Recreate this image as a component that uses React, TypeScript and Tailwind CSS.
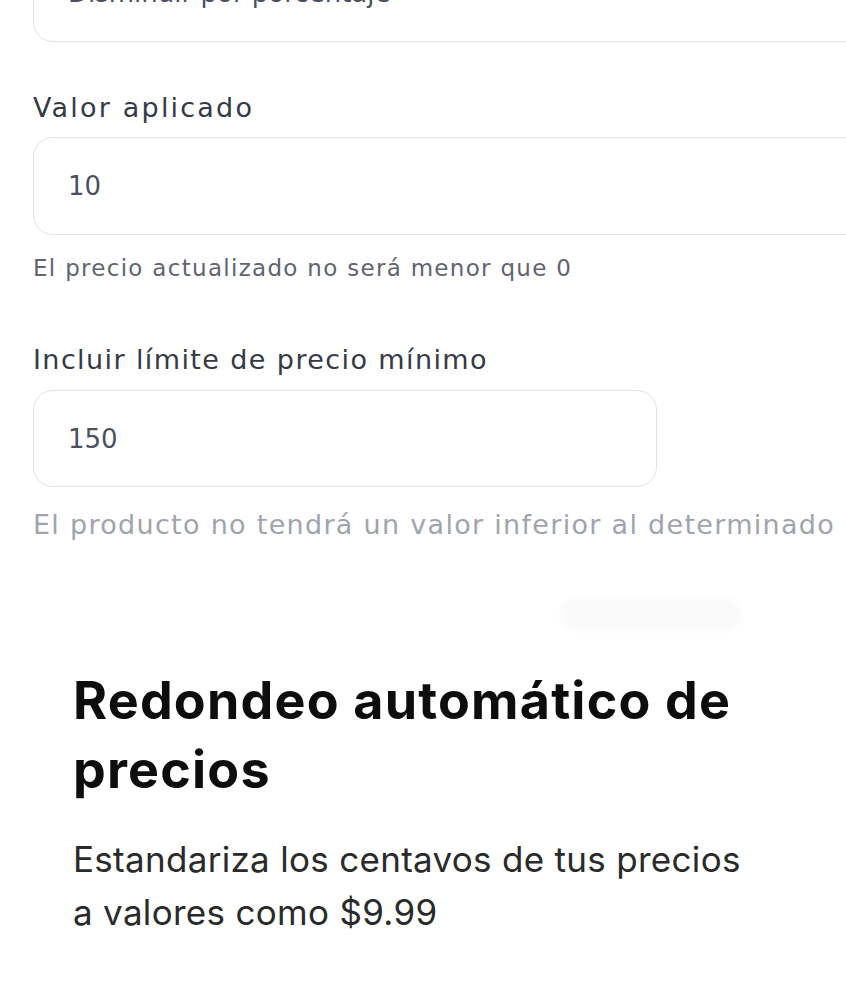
export default function App() {
  return (
    <div className="w-[846px] h-[993px] overflow-hidden bg-white">
      <div className="flex flex-col pl-[33px] font-['DejaVu_Sans',sans-serif]">
        <input
          readOnly
          defaultValue="Disminuir por porcentaje"
          className="-mt-[56px] h-[98px] w-[880px] rounded-[20px] border border-[#e1e4e9] pl-[34px] text-[26px] text-[#4a5060] outline-none"
        />

        <label className="mt-[50px] text-[27px] leading-[32px] tracking-[2.2px] text-[#343a46]">Valor aplicado</label>
        <input
          readOnly
          defaultValue="10"
          className="mt-[13px] h-[98px] w-[880px] rounded-[20px] border border-[#e1e4e9] pl-[34px] text-[26px] text-[#4a5060] outline-none"
        />
        <p className="mt-[20px] text-[23px] leading-[26px] tracking-[1.3px] text-[#5f6470]">El precio actualizado no será menor que 0</p>

        <label className="mt-[63px] text-[27px] leading-[32px] tracking-[1.4px] text-[#343a46]">Incluir límite de precio mínimo</label>
        <input
          readOnly
          defaultValue="150"
          className="mt-[14px] h-[97px] w-[624px] rounded-[20px] border border-[#e1e4e9] pl-[34px] text-[26px] text-[#4a5060] outline-none"
        />
        <p className="mt-[22px] text-[27px] leading-[32px] tracking-[1.3px] text-[#a0a4ae]">El producto no tendrá un valor inferior al determinado</p>

        <div className="mt-[57px] ml-[527px] h-[32px] w-[180px] rounded-2xl bg-[#fafafa] blur-[2px]" />
      </div>

      <div className="mt-[36px] ml-[73px] w-[690px] font-['Inter',sans-serif]">
        <h2 className="text-[52px] leading-[69px] font-bold tracking-[1.2px] text-[#0d0d0d]">Redondeo automático de precios</h2>
        <p className="mt-[29px] text-[35px] leading-[53px] tracking-[0.3px] text-[#2a2a2a]">
          Estandariza los centavos de tus precios a valores como $9.99
        </p>
      </div>
    </div>
  )
}
